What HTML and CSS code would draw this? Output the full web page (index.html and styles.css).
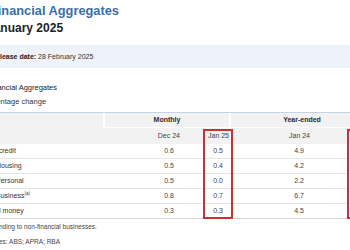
FILE: index.html
```html
<!DOCTYPE html>
<html lang="en">
<head>
<meta charset="utf-8">
<title>Financial Aggregates – January 2025</title>
<link rel="stylesheet" href="styles.css">
</head>
<body>
<div class="page">
  <h1 class="title">Financial Aggregates</h1>
  <p class="period">January 2025</p>
  <div class="release"><strong>Release date:</strong> 28 February 2025</div>
  <h2 class="table-title">Financial Aggregates</h2>
  <p class="table-sub">Percentage change</p>
  <div class="table-wrap">
    <table class="agg">
      <colgroup>
        <col class="c-label">
        <col class="c-m1">
        <col class="c-m2">
        <col class="c-y1">
        <col class="c-y2">
      </colgroup>
      <thead>
        <tr class="group-row">
          <th class="corner" rowspan="2"></th>
          <th class="grp grp-monthly" colspan="2">Monthly</th>
          <th class="grp grp-yearly" colspan="2">Year-ended</th>
        </tr>
        <tr class="period-row">
          <th class="num">Dec 24</th>
          <th class="num">Jan 25</th>
          <th class="num">Jan 24</th>
          <th class="num">Jan 25</th>
        </tr>
      </thead>
      <tbody>
        <tr><th class="lbl">Total credit</th><td>0.6</td><td>0.5</td><td>4.9</td><td>6.3</td></tr>
        <tr><th class="lbl sub">Housing</th><td>0.5</td><td>0.4</td><td>4.2</td><td>5.3</td></tr>
        <tr><th class="lbl sub">Personal</th><td>0.5</td><td>0.0</td><td>2.2</td><td>3.9</td></tr>
        <tr><th class="lbl sub">Business<sup>(a)</sup></th><td>0.8</td><td>0.7</td><td>6.7</td><td>8.8</td></tr>
        <tr><th class="lbl">Broad money</th><td>0.3</td><td>0.3</td><td>4.5</td><td>5.9</td></tr>
      </tbody>
    </table>
    <span class="mark mark-monthly"></span>
    <span class="mark mark-yearly"></span>
    <p class="note">(a) Lending to non-financial businesses.</p>
    <p class="note note-src">Sources: ABS; APRA; RBA</p>
  </div>
</div>
</body>
</html>
```

FILE: styles.css
```css
html, body {
  margin: 0;
  padding: 0;
  overflow: hidden;
  background: #ffffff;
}

body {
  font-family: "Liberation Sans", Arial, sans-serif;
  color: #333333;
}

.page {
  margin-left: -13px;
}

.title {
  margin: 3px 0 0 3px;
  font-size: 12.8px;
  line-height: 16px;
  font-weight: bold;
  color: #3a6ea8;
}

.period {
  margin: 2px 0 0;
  font-size: 12px;
  line-height: 14px;
  font-weight: bold;
  color: #222222;
}

.release {
  margin-top: 10px;
  padding: 0 4px;
  height: 23px;
  line-height: 23px;
  font-size: 7px;
  background: #eef2fa;
  color: #333333;
}

.release strong {
  color: #222222;
}

.table-title {
  margin: 15px 0 0;
  font-size: 7.5px;
  line-height: 10px;
  font-weight: normal;
  color: #222222;
}

.table-sub {
  margin: 4px 0 0 -6px;
  font-size: 7.5px;
  line-height: 10px;
  color: #333333;
}

.table-wrap {
  position: relative;
  margin: 5px 0 0 -5px;
}

.agg {
  border-collapse: separate;
  border-spacing: 0;
  table-layout: fixed;
  width: 391px;
  border-top: 1px solid #c6d3e6;
  font-size: 7px;
  color: #444444;
}

.c-label { width: 121px; }
.c-m1 { width: 77px; }
.c-m2 { width: 49px; }
.c-y1 { width: 81px; }
.c-y2 { width: 63px; }

.agg th,
.agg td {
  padding: 0;
  white-space: nowrap;
}

.group-row th,
.period-row th {
  background: #f2f2f2;
}

.group-row th {
  line-height: 14px;
  font-weight: bold;
  color: #2a2a2a;
}

.grp {
  border-left: 2px solid #ffffff;
  border-bottom: 1px solid #ffffff;
  text-align: center;
}

.grp-monthly {
  padding-right: 4px;
}

.grp-yearly {
  padding-left: 18px;
}

.period-row th {
  line-height: 16px;
  font-weight: normal;
  color: #444444;
}

.num,
.agg td {
  text-align: right;
  padding-right: 6px;
}

.agg tbody th,
.agg tbody td {
  line-height: 14px;
  border-bottom: 1px solid #e6e6e6;
}

.agg tbody tr:last-child th,
.agg tbody tr:last-child td {
  border-bottom-color: #d4d4d4;
}

.lbl {
  text-align: left;
  font-weight: normal;
  color: #333333;
}

.lbl.sub {
  padding-left: 14px;
}

.lbl sup {
  font-size: 4.5px;
  line-height: 0;
  vertical-align: 3px;
}

.mark {
  position: absolute;
  top: 17px;
  width: 30px;
  height: 90px;
  box-sizing: border-box;
  border: 2px solid #c83232;
}

.mark-monthly {
  left: 221px;
}

.mark-yearly {
  left: 365px;
}

.note {
  margin: 3px 0 0;
  font-size: 6.5px;
  line-height: 10px;
  color: #444444;
}

.note-src {
  margin-top: 5px;
}
```
